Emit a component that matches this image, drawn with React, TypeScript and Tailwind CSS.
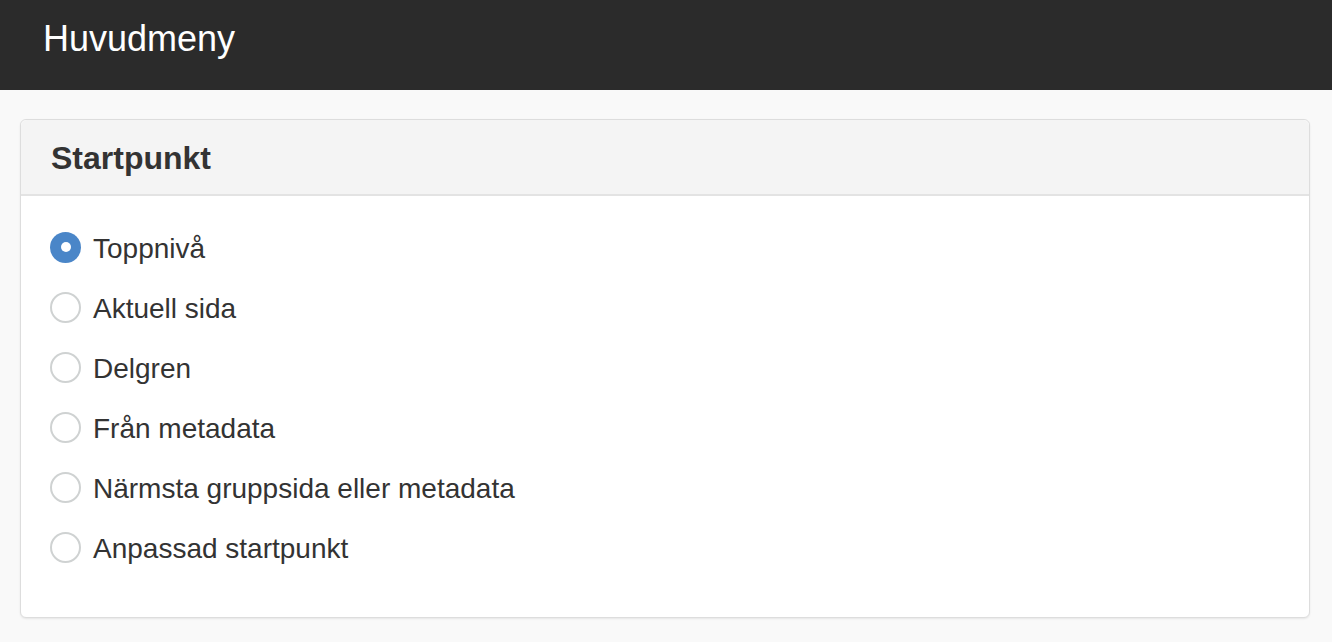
const options = [
  'Toppnivå',
  'Aktuell sida',
  'Delgren',
  'Från metadata',
  'Närmsta gruppsida eller metadata',
  'Anpassad startpunkt',
];

export default function App() {
  return (
    <div className="min-h-[642px] bg-[#f9f9f9] font-['Liberation_Sans',Arial,sans-serif] text-[#333]">
      {/* Top bar */}
      <div className="h-[90px] bg-[#2b2b2b] flex items-center pl-[43px] pb-[12px]">
        <h1 className="text-white text-[36px] leading-none">Huvudmeny</h1>
      </div>

      {/* Panel */}
      <div className="mx-[20px] mt-[29px] w-[1290px] bg-white border border-[#dddddd] rounded-[6px] shadow-[0_1px_2px_rgba(0,0,0,0.08)]">
        <div className="h-[76px] bg-[#f4f4f4] border-b-2 border-[#e3e3e3] rounded-t-[6px] flex items-center pl-[30px] pt-[2px]">
          <h2 className="text-[32px] font-bold leading-none text-[#333]">Startpunkt</h2>
        </div>
        <div className="pt-[21px] pb-[40px] pl-[29px]">
          {options.map((opt, i) => (
            <label key={opt} className="h-[60px] flex items-center gap-[12px]">
              {i === 0 ? (
                <span className="w-[31px] h-[31px] rounded-full bg-[#4a86c8] flex items-center justify-center">
                  <span className="w-[10px] h-[10px] rounded-full bg-white" />
                </span>
              ) : (
                <span className="w-[31px] h-[31px] rounded-full border-2 border-[#cfd2d2] bg-white" />
              )}
              <span className="text-[28px] leading-none pt-[3px]">{opt}</span>
            </label>
          ))}
        </div>
      </div>
    </div>
  );
}
